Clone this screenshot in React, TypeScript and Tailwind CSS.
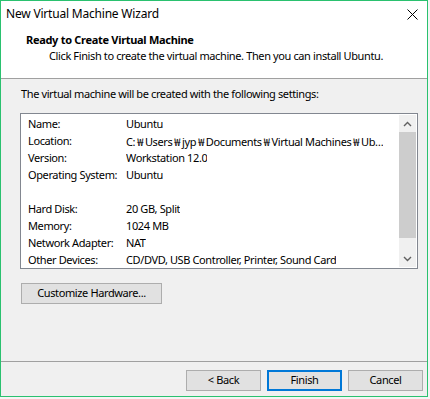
import React from "react";

const W = () => (
  <span className="px-[2px]" style={{ fontFamily: '"Noto Sans CJK KR", sans-serif' }}>
    ₩
  </span>
);

const rows: [string, React.ReactNode][] = [
  ["Name:", "Ubuntu"],
  [
    "Location:",
    <>
      C:<W />Users<W />jyp<W />Documents<W />Virtual Machines<W />Ub…
    </>,
  ],
  ["Version:", "Workstation 12.0"],
  ["Operating System:", "Ubuntu"],
  ["", ""],
  ["Hard Disk:", "20 GB, Split"],
  ["Memory:", "1024 MB"],
  ["Network Adapter:", "NAT"],
  ["Other Devices:", "CD/DVD, USB Controller, Printer, Sound Card"],
];

function Chevron({ up }: { up?: boolean }) {
  return (
    <svg width="9" height="6" viewBox="0 0 9 6">
      <path
        d={up ? "M1 5 L4.5 1.5 L8 5" : "M1 1 L4.5 4.5 L8 1"}
        fill="none"
        stroke="#606060"
        strokeWidth="1.4"
      />
    </svg>
  );
}

export default function App() {
  return (
    <div
      className="w-[430px] h-[399px] bg-[#f4f4f4] text-[11px] tracking-[-0.38px] text-black"
      style={{ fontFamily: '"Noto Sans", "Noto Sans CJK KR", sans-serif' }}
    >
      <div className="w-[428px] h-[397px] border border-[#2ac16f] flex flex-col bg-[#f0f0f0]">
        {/* title bar */}
        <div className="h-[25px] bg-white flex items-center justify-between pl-[5px]">
          <span className="text-[12px] tracking-[-0.2px]">New Virtual Machine Wizard</span>
          <svg width="11" height="11" viewBox="0 0 11 11" className="mr-[9px] mt-[1px]">
            <path d="M0.5 0.5 L10.5 10.5 M10.5 0.5 L0.5 10.5" stroke="#000" strokeWidth="1" />
          </svg>
        </div>

        {/* header */}
        <div className="h-[53px] bg-white border-b border-[#a0a0a0] pt-[6px]">
          <div className="h-[16px] leading-[16px] pl-[25px] font-bold tracking-[-0.3px]">
            Ready to Create Virtual Machine
          </div>
          <div className="h-[16px] leading-[16px] pl-[48px]">
            Click Finish to create the virtual machine. Then you can install Ubuntu.
          </div>
        </div>

        {/* body */}
        <div className="h-[282px] pt-[7px] pl-[19px] flex flex-col">
          <div className="h-[16px] leading-[16px] pl-[1px]">
            The virtual machine will be created with the following settings:
          </div>
          <div className="mt-[11px] w-[398px] h-[156px] border border-[#828790] bg-white flex">
            <div className="flex-1 pt-[2px] overflow-hidden">
              {rows.map(([k, v], i) => (
                <div key={i} className="h-[17px] flex items-center pl-[7px] whitespace-nowrap">
                  <span className="w-[98px] shrink-0">{k}</span>
                  <span className="overflow-hidden">{v}</span>
                </div>
              ))}
            </div>
            <div className="w-[19px] p-[1px] shrink-0">
              <div className="h-full bg-[#f0f0f0] flex flex-col">
                <div className="h-[17px] flex items-center justify-center">
                  <Chevron up />
                </div>
                <div className="h-[106px] bg-[#cdcdcd]" />
                <div className="flex-1" />
                <div className="h-[17px] flex items-center justify-center">
                  <Chevron />
                </div>
              </div>
            </div>
          </div>
          <button className="mt-[14px] ml-[1px] w-[141px] h-[21px] border border-[#adadad] bg-[#e1e1e1] flex items-center justify-center">
            Customize Hardware...
          </button>
        </div>

        {/* footer */}
        <div className="flex-1 border-t border-[#a0a0a0] pt-[8px] pr-[4px] flex justify-end gap-[6px]">
          <button className="w-[75px] h-[21px] border border-[#adadad] bg-[#e1e1e1] flex items-center justify-center">
            &lt; Back
          </button>
          <button className="w-[75px] h-[21px] border-2 border-[#0078d7] bg-[#e1e1e1] flex items-center justify-center">
            Finish
          </button>
          <button className="w-[75px] h-[21px] border border-[#adadad] bg-[#e1e1e1] flex items-center justify-center">
            Cancel
          </button>
        </div>
      </div>
    </div>
  );
}
